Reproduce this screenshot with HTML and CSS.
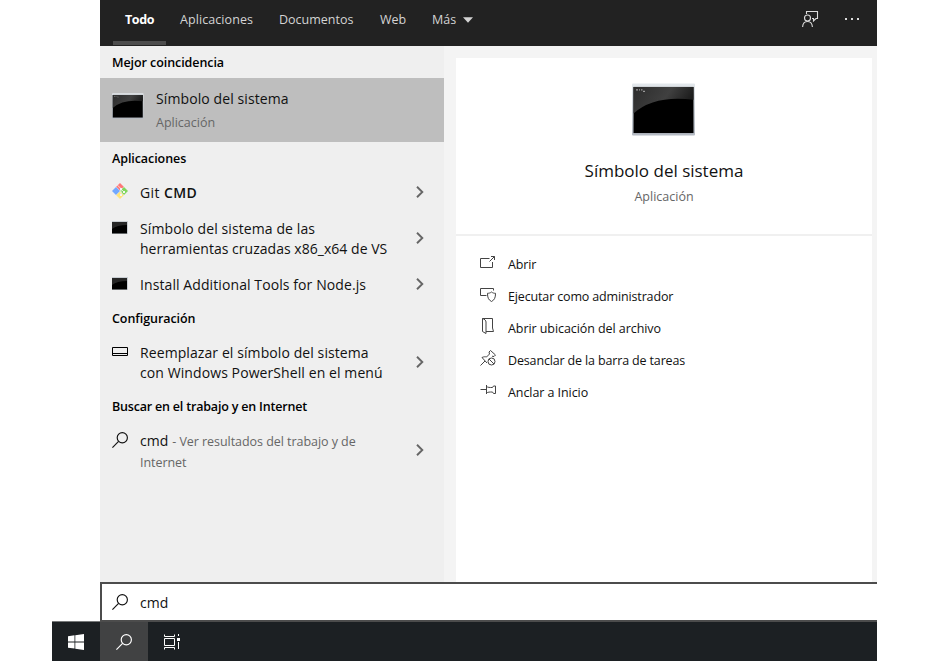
FILE: index.html
```html
<!DOCTYPE html>
<html lang="es">
<head>
<meta charset="utf-8">
<title>Búsqueda</title>
<link rel="stylesheet" href="styles.css">
</head>
<body>
<svg class="defs" width="0" height="0" aria-hidden="true">
  <defs>
    <linearGradient id="gloss" x1="0" y1="0" x2="1" y2="0.3"><stop offset="0" stop-color="#2c2c2c"/><stop offset="0.6" stop-color="#404040"/><stop offset="1" stop-color="#1c1c1c"/></linearGradient>
    <linearGradient id="frame" x1="0" y1="0" x2="0" y2="1"><stop offset="0" stop-color="#e3e8ec"/><stop offset="1" stop-color="#b4bac3"/></linearGradient>
    <symbol id="console" viewBox="0 0 64 54" preserveAspectRatio="none">
      <rect x="0" y="0.5" width="63" height="53" rx="1" fill="url(#frame)"/>
      <rect x="1.500" y="4" width="60" height="47" fill="#000"/>
      <path d="M1.500 4H61.500V17Q22 12 1.500 31Z" fill="url(#gloss)"/>
      <path d="M4 7h2M7 7h1M9 7h1.500M11 8.500h2" stroke="#999" stroke-width="1.200"/>
    </symbol>
    <symbol id="console-small" viewBox="0 0 16 13">
      <rect width="16" height="13" fill="#c9ced3"/>
      <rect y="1" width="15" height="11.500" fill="#000"/>
      <path d="M0 1H15V4Q5 4 0 8Z" fill="#262626"/>
    </symbol>
    <symbol id="chevron" viewBox="0 0 8 12"><path d="M1 0.800 6.300 6 1 11.200" fill="none" stroke="#666" stroke-width="1.900"/></symbol>
    <symbol id="search" viewBox="0 0 16 16"><circle cx="10.300" cy="5.700" r="5.100" fill="none" stroke="currentColor" stroke-width="1.150"/><path d="M6.600 9.400 0.400 15.600" stroke="currentColor" stroke-width="1.150"/></symbol>
  </defs>
</svg>
<div class="screen">
  <main class="flyout">
    <header class="tabs">
      <nav class="tab-list">
        <a class="tab active">Todo</a><a class="tab apps">Aplicaciones</a><a class="tab docs">Documentos</a><a class="tab web">Web</a><a class="tab more">Más<svg class="caret" width="10" height="6" viewBox="0 0 10 6"><path d="M0 0.300H10L5 5.700Z" fill="currentColor"/></svg></a>
      </nav>
      <div class="tools">
        <svg width="18" height="17" viewBox="0 0 18 17" fill="none" stroke="#ddd" stroke-width="1.100"><path d="M4.500 3V.5h11v7h-1.500l-2.500 2.500V7.500h-1.500"/><circle cx="5.500" cy="7" r="3"/><path d="M.6 16c.2-3.700 2.300-5.500 4.900-5.500s4.700 1.800 4.900 5.500"/></svg>
        <svg width="14" height="2" viewBox="0 0 14 2" fill="#ddd"><path d="M0 0h2v2H0zM6 0h2v2H6zM12 0h2v2h-2z"/></svg>
      </div>
    </header>
    <div class="panes">
      <section class="results">
        <h2>Mejor coincidencia</h2>
        <div class="best">
          <svg class="best-icon" width="32" height="26"><use href="#console"/></svg>
          <div class="best-text"><div class="name">Símbolo del sistema</div><div class="kind">Aplicación</div></div>
        </div>
        <h2>Aplicaciones</h2>
        <div class="item single">
          <svg class="icon git" width="16" height="16" viewBox="0 0 16 16"><path d="M8 0 11.800 3.800 8 7.500 4.200 3.800Z" fill="#ff7777"/><path d="M4 4 8 8 4 12 0 8Z" fill="#72a8ff"/><path d="M12 4 16 8 12 12 8 8Z" fill="#80d75c"/><path d="M8 8.500 11.800 12.300 8 16 4.200 12.300Z" fill="#ffe47b"/><path d="M5.500 2.200 9 5.700V12M9 6l3 3" fill="none" stroke="#f4f4f4" stroke-width=".8"/><path d="M8 5h2v2H8zM8 11h2v2H8zM11 8h2v2h-2z" fill="#f4f4f4"/></svg>
          <p class="git-name">Git <b>CMD</b></p>
          <svg class="chev" width="8" height="12"><use href="#chevron"/></svg>
        </div>
        <div class="item double">
          <svg class="icon con" width="16" height="13"><use href="#console-small"/></svg>
          <p><span class="loose">Símbolo del sistema de las</span><br><span class="snug">herramientas cruzadas x86_x64 de VS</span></p>
          <svg class="chev" width="8" height="12"><use href="#chevron"/></svg>
        </div>
        <div class="item single">
          <svg class="icon con" width="16" height="13"><use href="#console-small"/></svg>
          <p>Install Additional Tools for Node.js</p>
          <svg class="chev" width="8" height="12"><use href="#chevron"/></svg>
        </div>
        <h2>Configuración</h2>
        <div class="item double">
          <svg class="icon bar" width="16" height="9" viewBox="0 0 16 9"><path d="M.5.5h15v8H.5zM.5 6.500h15" fill="none" stroke="#000"/></svg>
          <p>Reemplazar el símbolo del sistema<br>con Windows PowerShell en el menú</p>
          <svg class="chev" width="8" height="12"><use href="#chevron"/></svg>
        </div>
        <h2 class="tight">Buscar en el trabajo y en Internet</h2>
        <div class="item double">
          <svg class="icon mag" width="16" height="16"><use href="#search"/></svg>
          <p>cmd <small>- Ver resultados del trabajo y de<br>Internet</small></p>
          <svg class="chev" width="8" height="12"><use href="#chevron"/></svg>
        </div>
      </section>
      <section class="detail">
        <div class="card">
          <div class="hero">
            <svg width="64" height="53"><use href="#console"/></svg>
            <div class="title">Símbolo del sistema</div>
            <div class="kind">Aplicación</div>
          </div>
          <ul class="actions">
            <li><svg width="16" height="16" viewBox="0 0 16 16"><path d="M9.500 4.500H.5v9h12V8M9.500 7.500l5-5M11 2.500h3.500V6"/></svg>Abrir</li>
            <li><svg width="16" height="16" viewBox="0 0 16 16"><path d="M13.500 4.500V2.500H.5v7h6M11.500 6c1.300 1 2.500 1.300 4 1.300 0 4.200-.8 6.500-4 8.200-3.200-1.700-4-4-4-8.200 1.500 0 2.700-.3 4-1.300Z"/></svg>Ejecutar como administrador</li>
            <li><svg width="16" height="16" viewBox="0 0 16 16"><path d="M2.500 13.500V.5h10v9.500l1 3.500H6M2.500.5c2.200.7 3.500 2 3.500 3.500v11.500L2.500 13.500"/></svg><span class="wide">Abrir ubicación del archivo</span></li>
            <li><svg width="16" height="16" viewBox="0 0 16 16"><path d="M.5 15.500 5 11M7 13 2 7.500C4 6.500 5.500 6.700 6.500 7L9.500 4 9 2l1.500-1.500L15.500 5 14 6.500l-2-.3"/><circle cx="11.500" cy="11.500" r="3.500"/><path d="m9 9 5 5"/></svg>Desanclar de la barra de tareas</li>
            <li><svg width="16" height="16" viewBox="0 0 16 16"><path d="M.5 7.500h6M6.500 3v9M6.500 4.500c1.500 1 3 1 6 1l1-1.500h2v7.500h-2l-1-1.500c-3 0-4.500 0-6 1"/></svg><span class="wide">Anclar a Inicio</span></li>
          </ul>
        </div>
      </section>
    </div>
    <div class="query"><svg width="16" height="16"><use href="#search"/></svg><span>cmd</span></div>
  </main>
  <footer class="taskbar">
    <div class="task"><svg width="16" height="16" viewBox="0 0 16 16" fill="#fff"><path d="M0 2.200 6.500 1.300V7.500H0zM7.300 1.200 16 0v7.500H7.300zM0 8.400h6.500v6.200L0 13.700zM7.300 8.400H16V16l-8.700-1.200z"/></svg></div>
    <div class="task on"><svg width="16" height="16"><use href="#search"/></svg></div>
    <div class="task"><svg width="16" height="16" viewBox="0 0 16 16" fill="none" stroke="#fff"><path d="M.5 4.500h10v7H.5zM.5.5v2h10v-2M.5 15.500v-2h10v2M14.500 0v2M14.500 8v7"/><path d="M13 4h3v3h-3z" fill="#fff" stroke="none"/></svg></div>
  </footer>
</div>
</body>
</html>
```

FILE: styles.css
```css
* { box-sizing: border-box; }
body { margin: 0; background: #fff; color: #111; font: 14px/20px "Open Sans", "Noto Sans", sans-serif; overflow: hidden; }
.defs { position: absolute; }
h2, p, ul { margin: 0; padding: 0; }
svg { flex: none; display: block; }
.screen { width: 877px; height: 661px; padding-left: 52px; display: flex; flex-direction: column; }
.flyout { margin-left: 48px; height: 622px; flex: none; display: flex; flex-direction: column; }

.tabs { height: 46px; flex: none; background: #222; display: flex; justify-content: space-between; padding-left: 13px; color: #d4d4d4; font-size: 12.500px; }
.tab-list { display: flex; }
.tab { height: 45px; line-height: 39px; white-space: nowrap; }
.tab.active { width: 53px; padding-left: 12px; border-bottom: 4px solid #4d4d4d; color: #fff; font-weight: 700; letter-spacing: -.4px; margin-right: 14px; }
.apps { width: 99px; letter-spacing: .08px; }
.docs { width: 101px; }
.web { width: 52px; }
.more { display: flex; }
.caret { margin: 17px 0 0 7px; }
.tools { display: flex; gap: 25px; padding: 11px 18px 0 0; }
.tools svg + svg { margin-top: 7px; }

.panes { height: 536px; flex: none; display: flex; }
.results { width: 344px; background: #efefef; white-space: nowrap; }
h2 { height: 32px; padding: 1px 0 0 12px; font-size: 12.500px; line-height: 32px; font-weight: 600; letter-spacing: -.07px; color: #000; }
.tight { letter-spacing: -.19px; }
.best { height: 64px; background: #bebebe; display: flex; padding: 11px 12px 0; }
.best-icon { margin-top: 4px; }
.best-text { margin-left: 12px; letter-spacing: .1px; }
.best .kind { margin-top: 4px; letter-spacing: 0; }
.kind { font-size: 12.500px; color: #666; }
.item { display: flex; padding: 9px 20px 0 12px; }
.single { height: 36px; }
.double { height: 56px; }
.item p { margin-left: 12px; flex: 1; letter-spacing: .09px; }
.item .git-name { letter-spacing: .4px; }
.item .loose { letter-spacing: .1px; }
.item .snug { letter-spacing: .03px; }
.item b { font-weight: 600; }
.item small { font-size: 12.500px; line-height: 21px; color: #666; letter-spacing: -.05px; }
.con { margin-top: 2px; }
.bar { margin-top: 4px; }
.mag { margin-top: 1px; }
.single .chev { margin-top: 3px; }
.double .chev { margin-top: 13px; }

.detail { flex: 1; background: #f4f4f4; padding: 12px 5px 0 12px; }
.card { height: 524px; background: #fff; }
.hero { height: 178px; padding-top: 25px; border-bottom: 2px solid #f0f0f0; display: flex; flex-direction: column; align-items: center; }
.title { margin-top: 22px; font-size: 17px; line-height: 26px; }
.hero .kind { margin-top: 3px; }
.actions { list-style: none; padding: 13px 0 0 24px; font-size: 12.500px; letter-spacing: -.15px; white-space: nowrap; }
.actions li { height: 32px; display: flex; align-items: center; }
.actions svg { margin: -6px 12px 0 0; fill: none; stroke: #444; }
.wide { letter-spacing: -.07px; }

.query { height: 40px; border: 2px solid #4c4c4c; border-right: 0; background: #fff; display: flex; align-items: center; padding-left: 10px; position: relative; z-index: 1; flex: none; }
.query svg { margin: -1px 12px 0 0; }
.query span { margin-top: 2px; }
.taskbar { height: 40px; margin-top: -1px; flex: none; background: #1c2023; border-top: 1px solid #77797a; display: flex; }
.task { width: 48px; display: flex; align-items: center; justify-content: center; color: #fff; }
.on { background: #414243; }
```
